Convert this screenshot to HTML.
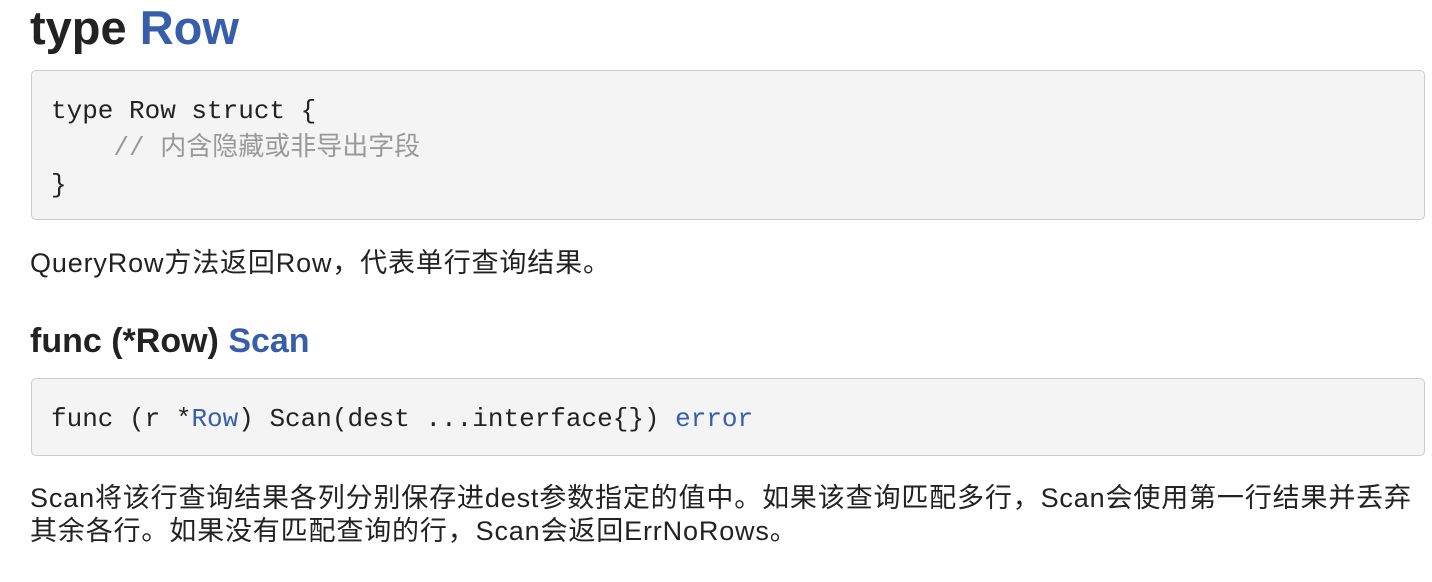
<!DOCTYPE html>
<html><head><meta charset="utf-8"><style>
body{margin:0;background:#fff;color:#222;font-family:"Liberation Sans","Noto Sans CJK SC",sans-serif;width:1432px;height:582px;overflow:hidden;position:relative}
.a{position:absolute;left:30px;white-space:nowrap}
h2,h3{margin:0;font-weight:bold;color:#222}
.b{color:#375eab}
pre{position:absolute;left:31px;width:1394px;margin:0;background:#f4f4f4;border:1px solid #ccc;border-radius:5px;box-sizing:border-box;font-family:"Liberation Mono","Noto Sans CJK SC",monospace;font-size:26px;line-height:37px;padding:0 19px;color:#222}
.c{color:#999}
p{margin:0;font-size:27px;line-height:33px;letter-spacing:0.85px}
</style></head><body>
<h2 class="a" style="top:0px;font-size:47px;line-height:56px">type <span class="b">Row</span></h2>
<pre style="top:70px;height:150px;padding-top:22px">type Row struct {
    <span class="c">// 内含隐藏或非导出字段</span>
}</pre>
<p class="a" style="top:247px">QueryRow方法返回Row，代表单行查询结果。</p>
<h3 class="a" style="top:321px;font-size:34px;line-height:40px">func (*Row) <span class="b">Scan</span></h3>
<pre style="top:378px;height:78px;padding-top:22px">func (r *<span class="b">Row</span>) Scan(dest ...interface{}) <span class="b">error</span></pre>
<p class="a" style="top:482px">Scan将该行查询结果各列分别保存进dest参数指定的值中。如果该查询匹配多行，Scan会使用第一行结果并丢弃<br>其余各行。如果没有匹配查询的行，Scan会返回ErrNoRows。</p>
</body></html>
